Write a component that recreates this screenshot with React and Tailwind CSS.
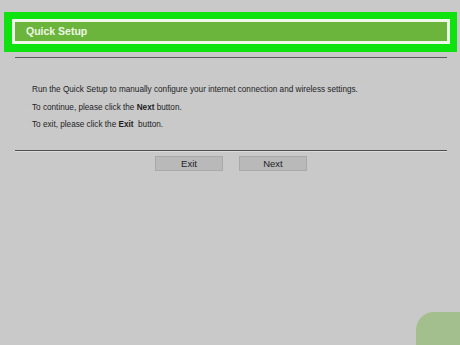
export default function App() {
  return (
    <div
      className="relative w-[460px] h-[345px] overflow-hidden bg-[#c9c9c9]"
      style={{ fontFamily: '"Liberation Sans", Arial, sans-serif' }}
    >
      <div className="pt-[12px] px-[4px]">
        <div className="bg-[#0fe30f] h-[40px] w-[453px] p-[7px_7px_8px_8px]">
          <div className="h-[25px] border-[3px] border-[#eef7ea] bg-[#6bb53c] flex items-center pl-[11px]">
            <span className="text-[10.5px] font-bold text-[#eef7e6] leading-none">Quick Setup</span>
          </div>
        </div>
      </div>
      <div className="mx-[15px] mt-[5px] w-[432px] h-[1px] bg-[#5a5a5a]"></div>
      <div className="pl-[32px] pt-[28px] text-[8.2px] text-[#1e1e1e] leading-none flex flex-col gap-[9.3px]">
        <p>Run the Quick Setup to manually configure your internet connection and wireless settings.</p>
        <p>
          To continue, please click the <b>Next</b> button.
        </p>
        <p>
          To exit, please click the <b>Exit</b>&nbsp; button.
        </p>
      </div>
      <div className="mx-[15px] mt-[21px] w-[432px] h-[1px] bg-[#4e4e4e]"></div>
      <div className="mx-[15px] w-[432px] h-[1px] bg-[#dcdcdc]"></div>
      <div className="flex pl-[155px] gap-[16px] mt-[4px]">
        <div className="w-[68px] h-[15px] bg-[#b9b9b9] border border-[#a9a9a9] flex items-center justify-center text-[9.5px] text-[#222]">
          Exit
        </div>
        <div className="w-[68px] h-[15px] bg-[#b9b9b9] border border-[#a9a9a9] flex items-center justify-center text-[9.5px] text-[#222]">
          Next
        </div>
      </div>
      <div className="absolute left-[416px] top-[312px] w-[80px] h-[60px] bg-[#a3bf8e] rounded-tl-[18px]"></div>
    </div>
  );
}
